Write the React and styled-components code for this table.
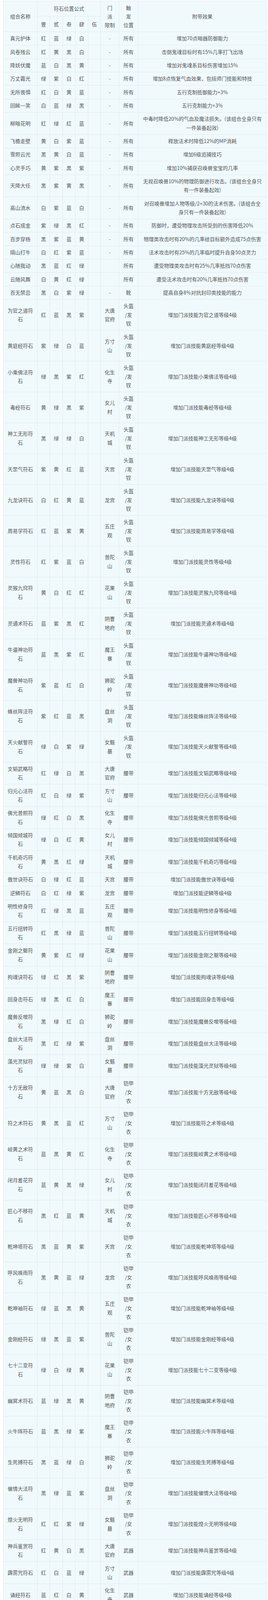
import React from 'react';
import styled, { createGlobalStyle } from 'styled-components';

const GlobalStyle = createGlobalStyle`
  html, body {
    margin: 0;
    padding: 0;
    background: #ffffff;
  }
  body {
    padding: 2px 0 0 8px;
    font-family: "Noto Sans CJK SC", "Noto Sans", sans-serif;
    color: #555555;
  }
`;

const Table = styled.table`
  width: 674px;
  table-layout: fixed;
  border-collapse: collapse;
  background: #f0fafd;
  font-size: 13px;
  line-height: 22.33px;
  color: #555555;
`;

const Col = styled.col`
  width: ${(p) => p.$w}px;
`;

const Cell = styled.td`
  border: 1px solid #e2e8eb;
  padding: 5.5px ${(p) => (p.$wide ? 11 : p.$tight ? 2 : 9)}px;
  text-align: center;
  vertical-align: middle;
  font-weight: normal;
  word-break: break-all;
`;

const Head = styled(Cell).attrs({ as: 'th' })``;

const ALL = '所有';
const HELM = ['头盔', '/发', '钗'];
const BELT = '腰带';
const ARMOR = ['铠甲', '/女', '衣'];
const WEAPON = '武器';
const NECK = '项链';

const rows = [
  ['真元护体', '红蓝绿白', '-', ALL, '增加70点暗器防御能力'],
  ['风卷残云', '红黄黑白', '-', ALL, '击倒鬼魂目标时有15%几率打飞出场'],
  ['降妖伏魔', '蓝白黑黄', '-', ALL, '增加对鬼魂系目标伤害增加15%'],
  ['万丈霞光', '绿紫白红', '-', ALL, '增加8点恢复气血效果，包括师门技能和特技'],
  ['无所畏惧', '红白黄蓝', '-', ALL, '五行克制抵御能力+3%'],
  ['回眸一笑', '白蓝绿黑', '-', ALL, '五行克制能力+3%'],
  ['柳暗花明', '红绿红蓝', '-', ALL, '中毒时降低20%的气血及魔法损失。(该组合全身只有一件装备起效)'],
  ['飞檐走壁', '黄白紫蓝', '-', ALL, '释放法术时降低12%的MP消耗'],
  ['雪照云光', '黑黄白蓝', '-', ALL, '增加6级追捕技巧'],
  ['心灵手巧', '黄紫黑紫', '-', ALL, '增加10%捕获召唤兽宝宝的几率'],
  ['天降大任', '黑紫黄黑', '-', ALL, '无视召唤兽10%的物理防御进行攻击。(该组合全身只有一件装备起效)'],
  ['高山流水', '白紫蓝白', '-', ALL, '对召唤兽增加人物等级/2+30的法术伤害。(该组合全身只有一件装备起效)'],
  ['点石成金', '紫绿黑红', '-', ALL, '防御时，遭受物理攻击所受到的伤害降低20%'],
  ['百步穿杨', '黑紫蓝黄', '-', ALL, '物理类攻击时有20%的几率给目标额外造成75点伤害'],
  ['隔山打牛', '白红紫蓝', '-', ALL, '法术攻击时有25%的几率临时提升自身50点灵力'],
  ['心随我动', '黑蓝红绿', '', ALL, '遭受物理类攻击时有25%几率抵挡70点伤害'],
  ['云随风舞', '白黄红绿', '', ALL, '遭受法术攻击时有20%几率抵挡70点伤害'],
  ['百无禁忌', '黑白紫绿', '-', '靴', '提高自身8%对抗封印类技能的能力'],
];

// 门派技能符石: [技能名, 颜色, 门派]
const skillGroups = [
  [HELM, [
    ['为官之道', '红蓝黑紫', '大唐官府'],
    ['黄庭经', '紫绿白蓝', '方寸山'],
    ['小乘佛法', '绿黑紫红', '化生寺'],
    ['毒经', '黄绿黑紫', '女儿村'],
    ['神工无形', '黑绿绿白', '天机城'],
    ['天罡气', '紫黄红蓝', '天宫'],
    ['九龙诀', '白红黄蓝', '龙宫'],
    ['周易学', '红蓝紫黄', '五庄观'],
    ['灵性', '红紫蓝白', '普陀山'],
    ['灵猴九窍', '黄白红红', '花果山'],
    ['灵通术', '蓝紫黑红', '阴曹地府'],
    ['牛逼神功', '蓝黑紫红', '魔王寨'],
    ['魔兽神功', '紫蓝红白', '狮驼岭'],
    ['蛛丝阵法', '紫红蓝黑', '盘丝洞'],
    ['天火献誓', '绿白紫绿', '女魃墓'],
  ]],
  [BELT, [
    ['文韬武略', '红绿白黑', '大唐官府'],
    ['归元心法', '红白绿紫', '方寸山'],
    ['佛光普照', '绿红白黑', '化生寺'],
    ['倾国倾城', '绿白红黄', '女儿村'],
    ['千机奇巧', '黄黑红绿', '天机城'],
    ['傲世诀', '白绿红蓝', '天宫'],
    ['逆鳞', '白红绿紫', '龙宫'],
    ['明性修身', '红绿黑蓝', '五庄观'],
    ['五行扭转', '红黑绿蓝', '普陀山'],
    ['金刚之躯', '黄紫红绿', '花果山'],
    ['拘魂诀', '绿红黑紫', '阴曹地府'],
    ['回身击', '绿黑红白', '魔王寨'],
    ['魔兽反噬', '黑绿红白', '狮驼岭'],
    ['盘丝大法', '黑红绿紫', '盘丝洞'],
    ['藻光灵狱', '绿绿紫白', '女魃墓'],
  ]],
  [ARMOR, [
    ['十方无敌', '黄蓝黑白', '大唐官府'],
    ['符之术', '黄黑蓝红', '方寸山'],
    ['岐黄之术', '蓝黑黄红', '化生寺'],
    ['闭月羞花', '蓝黄黑绿', '女儿村'],
    ['匠心不移', '黑红蓝黄', '天机城'],
    ['乾坤塔', '黑蓝黄紫', '天宫'],
    ['呼风唤雨', '黑黄蓝绿', '龙宫'],
    ['乾坤袖', '绿蓝黑黄', '五庄观'],
    ['金刚经', '绿黑蓝紫', '普陀山'],
    ['七十二变', '绿白绿黄', '花果山'],
    ['幽冥术', '蓝绿黑黄', '阴曹地府'],
    ['火牛阵', '蓝黑绿紫', '魔王寨'],
    ['生死搏', '黑蓝绿白', '狮驼岭'],
    ['催情大法', '黑绿蓝紫', '盘丝洞'],
    ['煌火无明', '红红紫绿', '女魃墓'],
  ]],
  [WEAPON, [
    ['神兵鉴赏', '红黄白黑', '大唐官府'],
    ['霹雳咒', '红白蓝绿', '方寸山'],
    ['诵经', '蓝红白黄', '化生寺'],
    ['沉鱼落雁', '蓝白红紫', '女儿村'],
    ['攻玉以石', '红绿蓝白', '天机城'],
    ['宁气诀', '白蓝红黄', '天宫'],
    ['破浪诀', '白红蓝黑', '龙宫'],
    ['潇湘仙雨', '黄蓝白黑', '五庄观'],
    ['五行学说', '黄白蓝黑', '普陀山'],
    ['神通广大', '红黄绿白', '花果山'],
    ['尸腐恶', '蓝黄白红', '阴曹地府'],
    ['牛虱阵', '蓝白黄黑', '魔王寨'],
    ['阴阳二气诀', '白黄蓝紫', '狮驼岭'],
    ['姊妹相随', '白蓝黄紫', '盘丝洞'],
    ['无双一击', '红黄紫白', '大唐官府'],
    ['碧龙灭法', '红紫黄蓝', '方寸山'],
    ['金刚伏魔', '蓝红紫黑', '化生寺'],
    ['玉质冰肌', '蓝紫红黄', '女儿村'],
    ['擎天之械', '紫绿紫红', '天机城'],
    ['混天术', '蓝黄紫紫', '天宫'],
    ['龙附', '黄蓝紫红', '龙宫'],
    ['修仙术', '绿蓝紫白', '五庄观'],
    ['护法金刚', '绿紫蓝黄', '普陀山'],
    ['如意金箍', '蓝黑黑黄', '花果山'],
    ['六道轮回', '蓝绿紫白', '阴曹地府'],
    ['震天诀', '蓝紫绿黑', '魔王寨'],
    ['狂兽诀', '紫绿蓝黄', '狮驼岭'],
    ['秋波暗送', '紫蓝绿白', '盘丝洞'],
    ['化神以灵', '紫黑蓝绿', '女魃墓'],
    ['弹指成烬', '蓝红红紫', '女魃墓'],
  ]],
  [NECK, [
    ['紫薇之术', '黄白黑红', '大唐官府'],
    ['神道无念', '红黑白紫', '方寸山'],
    ['大慈大悲', '白红黑黄', '化生寺'],
    ['香飘兰麝', '白黑红蓝', '女儿村'],
    ['探奥索隐', '蓝红黑绿', '天机城'],
    ['清明自在', '黑白红蓝', '天宫'],
    ['龙腾', '黑红白蓝', '龙宫'],
    ['混元道果', '绿白黑红', '五庄观'],
    ['观音咒', '绿黑白蓝', '普陀山'],
    ['齐天逞胜', '黑黄红紫', '花果山'],
    ['黄泉之息', '黑紫红绿', '阴曹地府'],
  ]],
];

skillGroups.forEach(([trigger, list]) => {
  list.forEach(([skill, colors, sect]) => {
    rows.push([`${skill}符石`, colors, sect, trigger, `增加门派技能${skill}等级4级`]);
  });
});

const widths = [87, 32, 33, 32, 33, 32, 47, 49, 329];

function Lines({ value }) {
  if (!Array.isArray(value)) return value;
  return value.map((line, i) => (
    <React.Fragment key={i}>
      {i > 0 && <br />}
      {line}
    </React.Fragment>
  ));
}

function App() {
  return (
    <>
      <GlobalStyle />
      <Table>
        <colgroup>
          {widths.map((w, i) => (
            <Col key={i} $w={w} />
          ))}
        </colgroup>
        <thead>
          <tr>
            <Head rowSpan={2}>组合名称</Head>
            <Head colSpan={5}>符石位置公式</Head>
            <Head rowSpan={2}><Lines value={['门', '派', '限制']} /></Head>
            <Head rowSpan={2}><Lines value={['触', '发', '位置']} /></Head>
            <Head rowSpan={2} $wide>附带效果</Head>
          </tr>
          <tr>
            {['壹', '贰', '叁', '肆', '伍'].map((n) => (
              <Head key={n} $tight>{n}</Head>
            ))}
          </tr>
        </thead>
        <tbody>
          {rows.map(([name, colors, sect, trigger, effect]) => (
            <tr key={name}>
              <Cell>{name}</Cell>
              {[...colors, ''].map((c, i) => (
                <Cell key={i} $tight>{c}</Cell>
              ))}
              <Cell>{sect}</Cell>
              <Cell><Lines value={trigger} /></Cell>
              <Cell $wide>{effect}</Cell>
            </tr>
          ))}
        </tbody>
      </Table>
    </>
  );
}

export default App;
